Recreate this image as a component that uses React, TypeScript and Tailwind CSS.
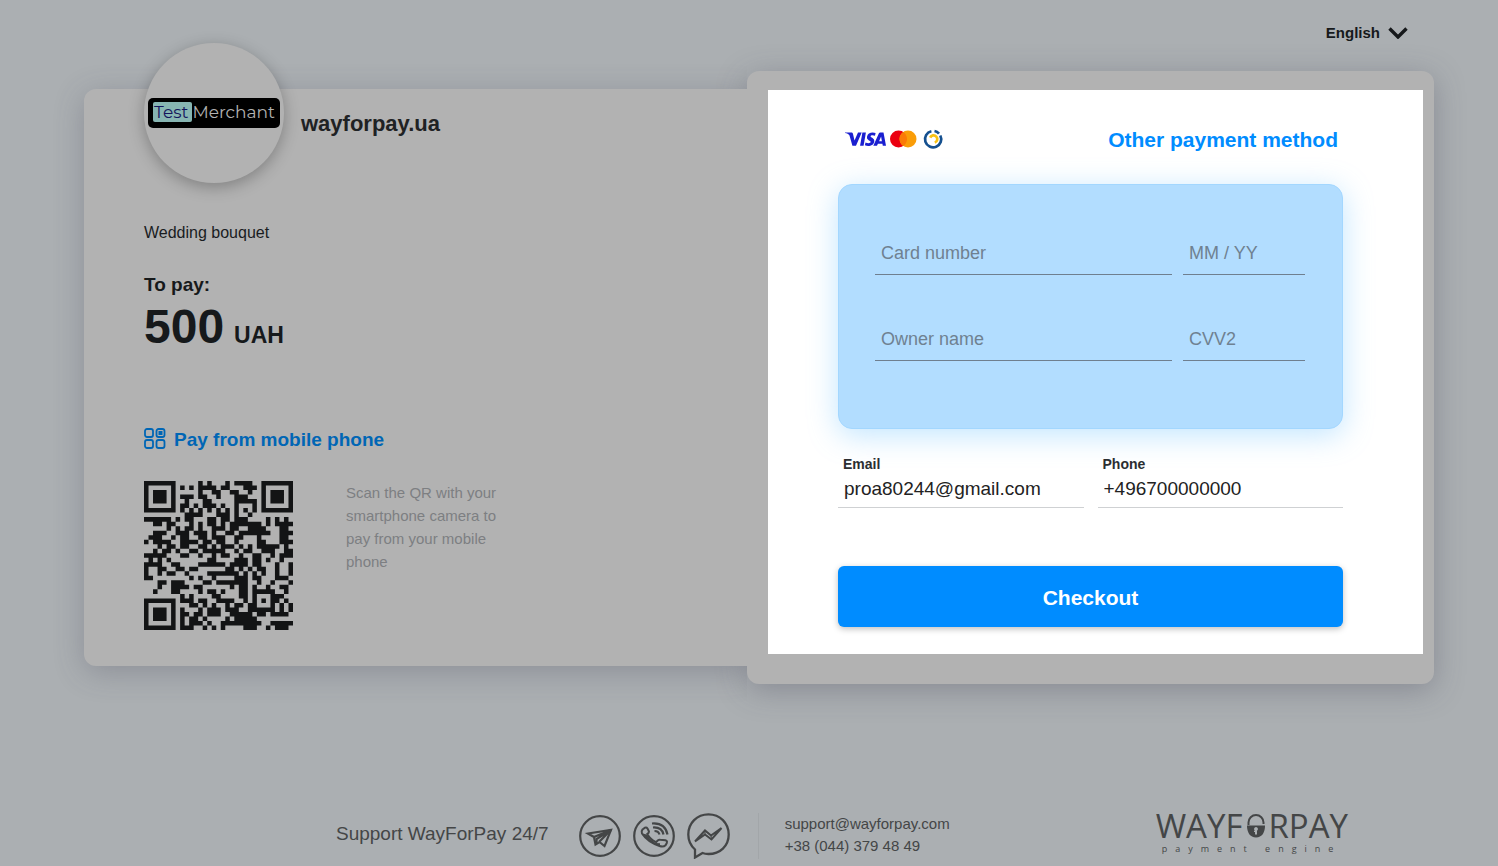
import type { ReactNode } from "react";

const QR_ROWS = [
  "111111100000101000101111001111111",
  "100000101010111101100011101000001",
  "101110100000100110011001001011101",
  "101110101110110010001110001011101",
  "101110100100011000001111101011101",
  "100000101101011101001000101000001",
  "111111101010101010101010101111111",
  "000000000111100011101001000000000",
  "111111010110001101101110000101010",
  "001101100010101101011111110101111",
  "000001010110100111011001111000110",
  "001110011101110100110111111100111",
  "011100101100110111001100010000110",
  "101111001111011011001000011000111",
  "000101101100110101110101011111010",
  "001011010011011111001011001110011",
  "111110001100100101100100110010111",
  "010101000000001100001110110100100",
  "111100110000111111011110110001001",
  "100110011011000000110101011001001",
  "100101100100001111111010101001001",
  "110000000010100100001110110001110",
  "000110111000011011111110010010001",
  "000100111101100000010110100100110",
  "001000110000101101000110111110010",
  "000000001010000110000110100011100",
  "111111101110110011110010101011010",
  "100000100011010100101101100010101",
  "101110101000101110111001111110101",
  "101110101101101110011111011011110",
  "101110101011010000101111100000000",
  "100000101011101001111111110011111",
  "111111101110010101000011100101110",
];

const QR_PATH = QR_ROWS.map((row, y) =>
  Array.from(row.matchAll(/1+/g))
    .map((run) => `M${run.index} ${y}h${run[0].length}v1h-${run[0].length}z`)
    .join(""),
).join("");

function QrCode() {
  return (
    <svg viewBox="0 0 33 33" className="size-[149px] shrink-0" role="img" aria-label="QR">
      <path d={QR_PATH} fill="#131415" />
    </svg>
  );
}

function MerchantLogo() {
  return (
    <div className="flex size-[140px] shrink-0 items-center justify-center rounded-full bg-[#b2b2b2] shadow-[0_4px_16px_rgba(0,0,0,0.28)]">
      <div className="flex h-[30px] w-[132px] items-center justify-center rounded-[5px] bg-black pb-0.5 font-['Montserrat','Noto_Sans',sans-serif] text-[17px] leading-5 text-[#b2b2b2]">
        <span className="rounded-[2px] bg-[#87b5b2] pr-1 pl-px text-[#14145c]">Test</span>
        <span>Merchant</span>
      </div>
    </div>
  );
}

function PaymentBrands() {
  return (
    <svg width="100" height="22" viewBox="0 0 100 22" className="mb-0.5" role="img" aria-label="Visa, Mastercard, Prostir">
      <g fill="#1a1fd0">
        <path d="M1 4.6h6.2c.9 0 1.6.5 1.8 1.4l1.500 6.600L14 4.600h3.700L12 17.800H8.400L5.500 7.400C4.600 6.200 3 5.400 1 5.100z" />
        <path d="M18.400 4.600h3.500l-2.300 13.200h-3.500z" />
        <path d="M31.600 5l-.6 2.800c-1.400-.6-4.200-.9-4.400.4-.2 1.400 4.200 1.700 3.700 5.200-.6 4.200-5.400 5.300-9.400 3.900l.6-2.900c1.700.9 4.900 1.200 5.200-.4.200-1.500-4.300-1.700-3.700-5.300.6-3.900 5-5 8.600-3.700z" />
        <path d="M36.200 4.600h3.300l2.500 13.200h-3.200l-.4-2h-4.500l-.9 2h-3.700l5.500-12.200c.3-.6.800-1 1.400-1zm.9 4l-2 4.700h2.800z" />
      </g>
      <circle cx="54.500" cy="11" r="8.500" fill="#eb0010" />
      <circle cx="64" cy="11" r="8.500" fill="#fa9d08" />
      <path d="M59.250 3.950a8.500 8.500 0 010 14.100 8.500 8.500 0 010-14.100z" fill="#fb7a06" />
      <g fill="none" strokeWidth="2.700">
        <path d="M87.400 3.300A8.100 8.100 0 1096.300 7.500" stroke="#15508f" />
        <path d="M90.500 3A8.100 8.100 0 0195 5.600" stroke="#15508f" />
        <path d="M86.200 9.600A3.700 3.700 0 1190.800 14.600" stroke="#f9c213" />
      </g>
    </svg>
  );
}

function GridIcon() {
  return (
    <svg width="22" height="21" viewBox="0 0 22 21" fill="none" stroke="#0066b5" strokeWidth="1.800" aria-hidden="true">
      <rect x="1" y="1" width="8" height="8" rx="2" />
      <rect x="12.500" y="1" width="8" height="8" rx="2" />
      <rect x="1" y="12" width="8" height="8" rx="2" />
      <rect x="12.500" y="12" width="8" height="8" rx="2" />
      <rect x="14.500" y="3" width="4" height="4" fill="#0066b5" stroke="none" />
    </svg>
  );
}

function TelegramIcon() {
  return (
    <svg width="42" height="44" viewBox="0 0 42 44" fill="none" stroke="#444647" strokeWidth="2.200" aria-hidden="true">
      <circle cx="21" cy="22" r="19.800" />
      <path d="M9 19.500L32 16 25.500 32 20.500 28 16.500 30.500 15 23z" />
      <path d="M15 23L32 16 17.500 25V30M20.500 27.500L32 16" />
    </svg>
  );
}

function PhoneIcon() {
  return (
    <svg width="42" height="44" viewBox="0 0 42 44" fill="none" stroke="#444647" strokeWidth="2" aria-hidden="true">
      <circle cx="21" cy="22" r="19.800" strokeWidth="2.200" />
      <path d="M9.500 15.500L12 13.700Q13.500 13 14.500 14.500L16 17.500Q16 19 14.300 20Q16.800 25 23 28.200L25 26.300Q26 25.500 27.200 25.800L32.500 26.300Q34.500 27 33.800 29L32.500 31.300Q30.500 33.300 26.500 32Q14.500 28 9 19.500Q8 17.300 9.500 15.500Z" />
      <path d="M9.500 19.500Q16 29 27 32L27 29.300 22.500 29Q17 26 13.500 20.500z" fill="#444647" stroke="none" />
      <path d="M19 9.500Q32 8.500 34.500 20.500M20 13.500Q29 13 30.500 20.500M21.500 17Q25.500 17 26.500 20.500" strokeWidth="2.200" />
    </svg>
  );
}

function MessengerIcon() {
  return (
    <svg width="43" height="46" viewBox="0 0 43 46" fill="none" stroke="#444647" aria-hidden="true">
      <path d="M8 44.500V36.500Q1.300 30.500 1.300 21.500C1.300 10 10 1.300 21.500 1.300S41.700 10 41.700 21.500 33 41 21.500 41Q18 41 15.500 40z" strokeWidth="2.300" />
      <path d="M8 28.500L18 17.500 24 22.500 34.500 15 24.500 26.500 18 21.500z" strokeWidth="2" />
      <path d="M18 17.500L24 22.500 24.500 26.500 18 21.500z" strokeWidth="1" />
    </svg>
  );
}

function WayForPayLogo() {
  return (
    <div className="pb-2 font-['Open_Sans','Noto_Sans',sans-serif] text-[#444647]">
      <div className="flex items-center text-[33px] leading-[34px]">
        <span>WAYF</span>
        <svg width="20" height="26" viewBox="0 0 20 26" className="ml-1" role="img" aria-label="O">
          <path d="M2.500 12V9.500a7.500 7.500 0 0115 0V11" fill="none" stroke="#444647" strokeWidth="2" />
          <path d="M1 12.500h18c0 7-3 12-9 12s-9-5-9-12z" fill="#444647" />
          <path d="M10 14a2 2 0 011 3.700V21.500H9v-2.500H8v-1.300h1A2 2 0 0110 14z" fill="#abafb2" />
        </svg>
        <span className="pl-0.5">RPAY</span>
      </div>
      <div className="pl-1.5 text-[9px] leading-3 tracking-[8px]">payment engine</div>
    </div>
  );
}

type FieldProps = { id: string; label: string };

function CardField({ id, label }: FieldProps) {
  return (
    <input
      id={id}
      aria-label={label}
      placeholder={label}
      className="h-[43px] w-full min-w-0 border-b border-[#6f7f8f] bg-transparent px-1.5 text-[18px] text-[#222] outline-none placeholder:text-[#6f8191]"
    />
  );
}

function ContactField({ id, label, value, type }: FieldProps & { value: string; type: string }) {
  return (
    <div className="flex min-w-0 flex-col border-b border-[#cfd1d3] pb-1">
      <label htmlFor={id} className="pl-[5px] text-[14px] leading-5 font-bold text-[#2b2e31]">
        {label}
      </label>
      <input
        id={id}
        type={type}
        defaultValue={value}
        className="h-[29px] w-full bg-transparent px-1.5 text-[19px] text-[#222] outline-none"
      />
    </div>
  );
}

function IconLink({ label, children }: { label: string; children: ReactNode }) {
  return (
    <a href="#" aria-label={label} className="block">
      {children}
    </a>
  );
}

function OrderCard() {
  return (
    <section className="relative z-10 h-[577px] rounded-l-xl bg-[#b2b2b2] px-[60px] shadow-[0_6px_30px_rgba(70,70,90,0.3)] [clip-path:inset(-60px_0_-60px_-60px)]">
      <div className="-mt-[46px] flex items-center gap-[17px]">
        <MerchantLogo />
        <h1 className="pt-[22px] text-[22px] leading-7 font-bold text-[#1f2224]">wayforpay.ua</h1>
      </div>
      <p className="mt-10 text-[16px] leading-5 text-[#191c1f]">Wedding bouquet</p>
      <p className="mt-[30px] text-[19px] leading-6 font-bold text-[#16191b]">To pay:</p>
      <p className="flex items-baseline gap-2.5 leading-[60px] font-bold text-[#16191b]">
        <span className="text-[48px]">500</span>
        <span className="text-[23px]">UAH</span>
      </p>
      <h2 className="mt-[59px] flex items-center gap-2 text-[19px] leading-6 font-bold text-[#0066b5]">
        <GridIcon />
        <span className="pt-1">Pay from mobile phone</span>
      </h2>
      <div className="mt-[29px] flex gap-[53px]">
        <QrCode />
        <p className="w-[156px] text-[15px] leading-[23px] text-[#7d7f82]">
          Scan the QR with your smartphone camera to pay from your mobile phone
        </p>
      </div>
    </section>
  );
}

function PaymentCard() {
  return (
    <section className="rounded-xl bg-[#b2b2b2] pt-[19px] pr-[11px] pb-[30px] pl-[21px] shadow-[0_6px_30px_rgba(70,70,90,0.35)]">
      <form className="bg-white pt-[38px] pr-20 pb-[27px] pl-[70px]" onSubmit={(e) => e.preventDefault()}>
        <div className="flex h-6 items-center justify-between pr-[5px] pl-1.5">
          <PaymentBrands />
          <a href="#" className="text-[21px] leading-6 font-black text-[#008cff]">
            Other payment method
          </a>
        </div>
        <div className="mt-8 grid grid-cols-[297fr_122fr] gap-x-[11px] gap-y-[43px] rounded-[14px] border border-[#a3d7ff] bg-[#b2ddff] pt-[47px] pr-[37px] pb-[67px] pl-9 shadow-[0_6px_30px_rgba(100,190,255,0.4)]">
          <CardField id="card-number" label="Card number" />
          <CardField id="card-expiry" label="MM / YY" />
          <CardField id="card-owner" label="Owner name" />
          <CardField id="card-cvv" label="CVV2" />
        </div>
        <div className="mt-[25px] grid grid-cols-2 gap-[14px]">
          <ContactField id="email" label="Email" value="proa80244@gmail.com" type="email" />
          <ContactField id="phone" label="Phone" value="+496700000000" type="tel" />
        </div>
        <button
          type="submit"
          className="mt-[58px] h-[61px] w-full rounded-md bg-[#008cff] pt-0.5 text-[21px] font-bold text-white shadow-[0_2px_6px_rgba(0,0,0,0.25)]"
        >
          Checkout
        </button>
      </form>
    </section>
  );
}

export default function App() {
  return (
    <div className="flex min-h-screen flex-col bg-[#abafb2] font-['Liberation_Sans',Arial,sans-serif]">
      <header className="flex h-[71px] items-start justify-end pt-[22px] pr-[90px]">
        <button type="button" className="flex items-center gap-2 text-[15px] leading-[22px] font-bold text-[#16191b]">
          English
          <svg width="20" height="12" viewBox="0 0 20 12" fill="none" stroke="#16191b" strokeWidth="3.400" aria-hidden="true">
            <path d="M1.500 1.500L10 10 18.500 1.500" />
          </svg>
        </button>
      </header>
      <main className="grid grid-cols-[663fr_687fr] items-center pr-16 pl-[84px]">
        <OrderCard />
        <PaymentCard />
      </main>
      <footer className="mt-auto flex items-center justify-between pt-5 pr-[150px] pb-[3px] pl-[336px] text-[#444647]">
        <div className="flex items-center">
          <p className="pb-1 text-[19px] leading-6">Support WayForPay 24/7</p>
          <div className="ml-[30px] flex items-center gap-3">
            <IconLink label="Telegram">
              <TelegramIcon />
            </IconLink>
            <IconLink label="Call">
              <PhoneIcon />
            </IconLink>
            <IconLink label="Messenger">
              <MessengerIcon />
            </IconLink>
          </div>
          <address className="ml-7 flex flex-col border-l border-[#a2a6a9] pb-0.5 pl-[26px] text-[15px] leading-[22px] not-italic">
            <a href="mailto:support@wayforpay.com">support@wayforpay.com</a>
            <a href="tel:+380443794849">+38 (044) 379 48 49</a>
          </address>
        </div>
        <WayForPayLogo />
      </footer>
    </div>
  );
}
